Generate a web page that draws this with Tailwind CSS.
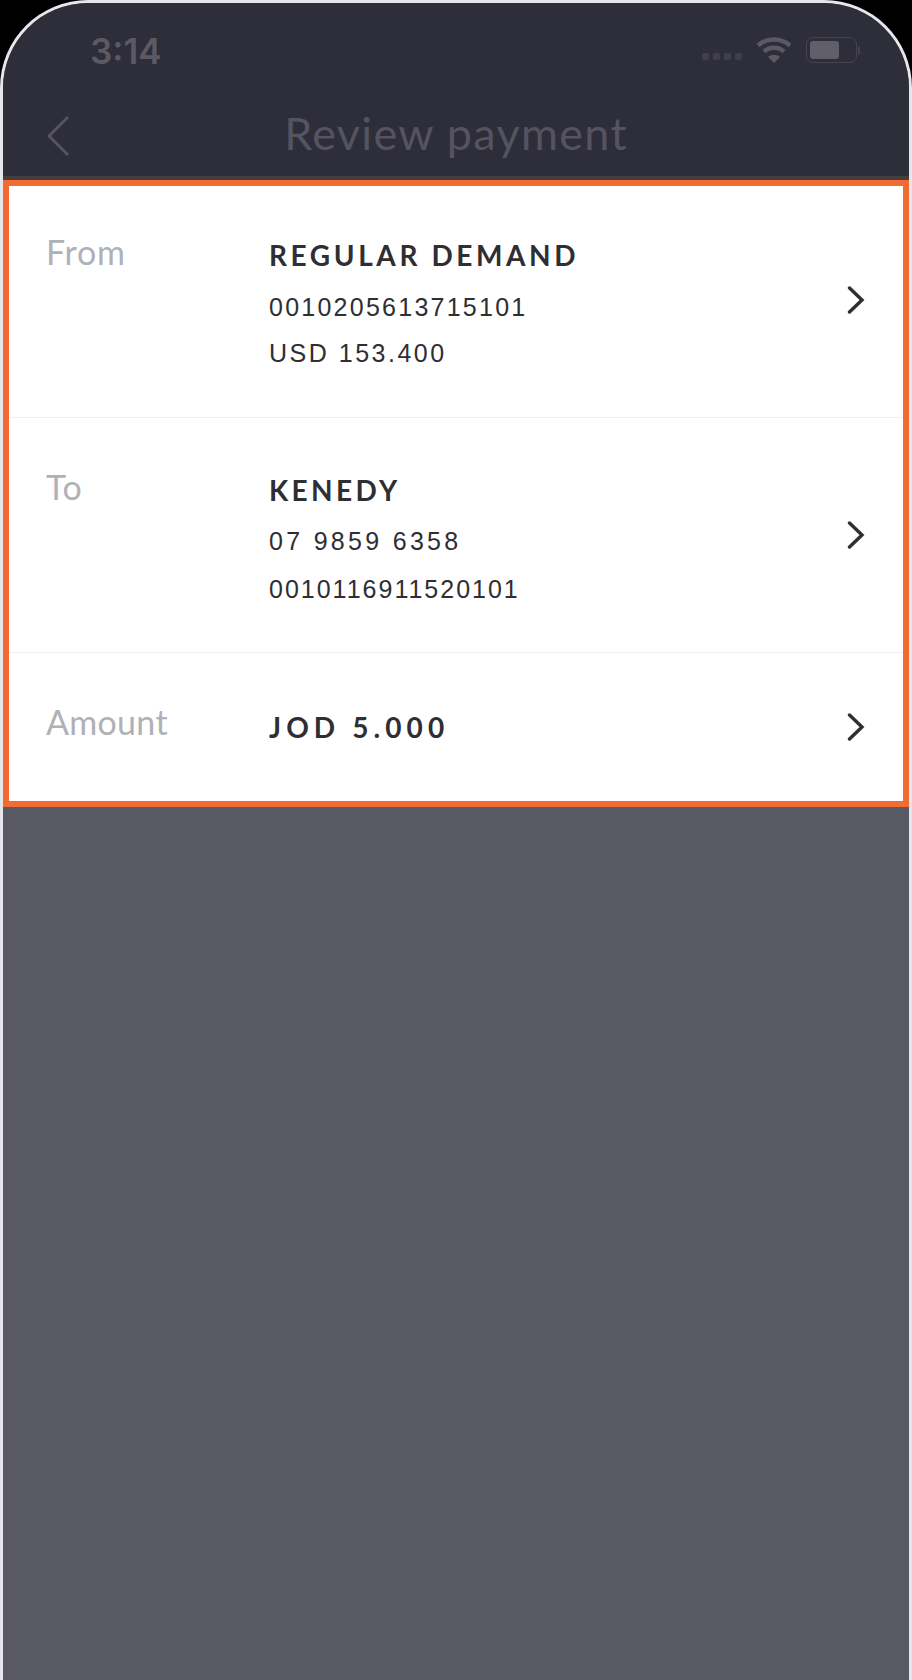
<!DOCTYPE html>
<html><head><meta charset="utf-8"><script src="https://cdn.jsdelivr.net/npm/@tailwindcss/browser@4"></script></head>
<body class="bg-black">
<div class="w-[912px] h-[1680px] overflow-hidden rounded-t-[88px] border-x-[3px] border-t-[3px] border-[#e6e6ec] bg-[#595963] font-['Lato',sans-serif] flex flex-col">
  <header class="h-[173px] bg-[#2e2d3a] flex flex-col shrink-0">
    <div class="h-[94px] flex items-center justify-between pl-[87px] pr-[49px] pt-[2px]">
      <span class="text-[35px] font-semibold text-[#5a5964] font-['Inter',sans-serif] leading-none">3:14</span>
      <div class="flex items-center gap-[14px] mt-[-2px]">
        <div class="flex gap-[4px] mt-[13px]">
          <span class="w-[7px] h-[7px] rounded-[2px] bg-[#403f4b]"></span><span class="w-[7px] h-[7px] rounded-[2px] bg-[#403f4b]"></span><span class="w-[7px] h-[7px] rounded-[2px] bg-[#403f4b]"></span><span class="w-[7px] h-[7px] rounded-[2px] bg-[#403f4b]"></span>
        </div>
        <svg width="36" height="28" viewBox="0 0 36 28" fill="none"><path d="M2 9.5C11 1.5 25 1.5 34 9.5" stroke="#5a5964" stroke-width="4.5"/><path d="M8 15.5C13.5 10.5 22.5 10.5 28 15.5" stroke="#5a5964" stroke-width="4.5"/><path d="M12 21L18 27L24 21C20.5 18 15.5 18 12 21Z" fill="#5a5964"/></svg>
        <div class="flex items-center">
          <div class="w-[51px] h-[26px] rounded-[7px] border border-[#44434f] p-[3px]"><div class="w-[29px] h-full rounded-[3px] bg-[#5f5e69]"></div></div>
          <div class="w-[2px] h-[9px] ml-[1px] rounded-r bg-[#44434f]"></div>
        </div>
      </div>
    </div>
    <div class="relative flex-1 flex items-center justify-center pb-[6px]">
      <svg class="absolute left-[44px] top-[18px]" width="24" height="42" viewBox="0 0 24 42" fill="none"><path d="M21 2L2 21L21 40" stroke="#54535f" stroke-width="3"/></svg>
      <h1 class="text-[45px] leading-none text-[#54535f] tracking-[1.3px]">Review payment</h1>
    </div>
  </header>
  <div class="h-[4px] bg-[#463d3f] shrink-0"></div>
  <main class="border-[6px] border-[#f26b33] bg-white shrink-0 h-[627px] flex flex-col">
    <section class="h-[232px] border-b border-[#f0f0f2] flex items-start pl-[37px] pr-[38px] pt-[51px] shrink-0">
      <span class="mt-[-5px] w-[223px] text-[34px] leading-[40px] tracking-[0.8px] text-[#b0b1b7] shrink-0">From</span>
      <div class="flex-1">
        <p class="text-[28px] leading-[36px] font-bold tracking-[3.6px] text-[#2e2e33]">REGULAR DEMAND</p>
        <p class="mt-[19px] text-[25px] leading-[30px] tracking-[2.25px] text-[#2e2e33] font-['Liberation_Sans',sans-serif]">0010205613715101</p>
        <p class="mt-[16px] text-[25px] leading-[30px] tracking-[2.5px] text-[#2e2e33] font-['Liberation_Sans',sans-serif]">USD 153.400</p>
      </div>
      <svg class="mt-[49px]" width="18" height="28" viewBox="0 0 18 28" fill="none"><path d="M2.5 2L15 14L2.5 26" stroke="#2e2e33" stroke-width="3.4" stroke-linecap="round"/></svg>
    </section>
    <section class="h-[235px] border-b border-[#f0f0f2] flex items-start pl-[37px] pr-[38px] pt-[54px] shrink-0">
      <span class="mt-[-5px] w-[223px] text-[34px] leading-[40px] tracking-[0.6px] text-[#b0b1b7] shrink-0">To</span>
      <div class="flex-1">
        <p class="text-[28px] leading-[36px] font-bold tracking-[3.4px] text-[#2e2e33]">KENEDY</p>
        <p class="mt-[18px] text-[25px] leading-[30px] tracking-[3.3px] text-[#2e2e33] font-['Liberation_Sans',sans-serif]">07 9859 6358</p>
        <p class="mt-[18px] text-[25px] leading-[30px] tracking-[2px] text-[#2e2e33] font-['Liberation_Sans',sans-serif]">0010116911520101</p>
      </div>
      <svg class="mt-[49px]" width="18" height="28" viewBox="0 0 18 28" fill="none"><path d="M2.5 2L15 14L2.5 26" stroke="#2e2e33" stroke-width="3.4" stroke-linecap="round"/></svg>
    </section>
    <section class="flex-1 flex items-center pl-[37px] pr-[38px]">
      <span class="mt-[-10px] w-[223px] text-[34px] leading-[40px] tracking-[0.3px] text-[#b0b1b7] shrink-0">Amount</span>
      <p class="flex-1 text-[28px] leading-[36px] font-bold tracking-[5.1px] text-[#2e2e33]">JOD 5.000</p>
      <svg width="18" height="28" viewBox="0 0 18 28" fill="none"><path d="M2.5 2L15 14L2.5 26" stroke="#2e2e33" stroke-width="3.4" stroke-linecap="round"/></svg>
    </section>
  </main>
  <div class="flex-1"></div>
</div>
</body></html>
